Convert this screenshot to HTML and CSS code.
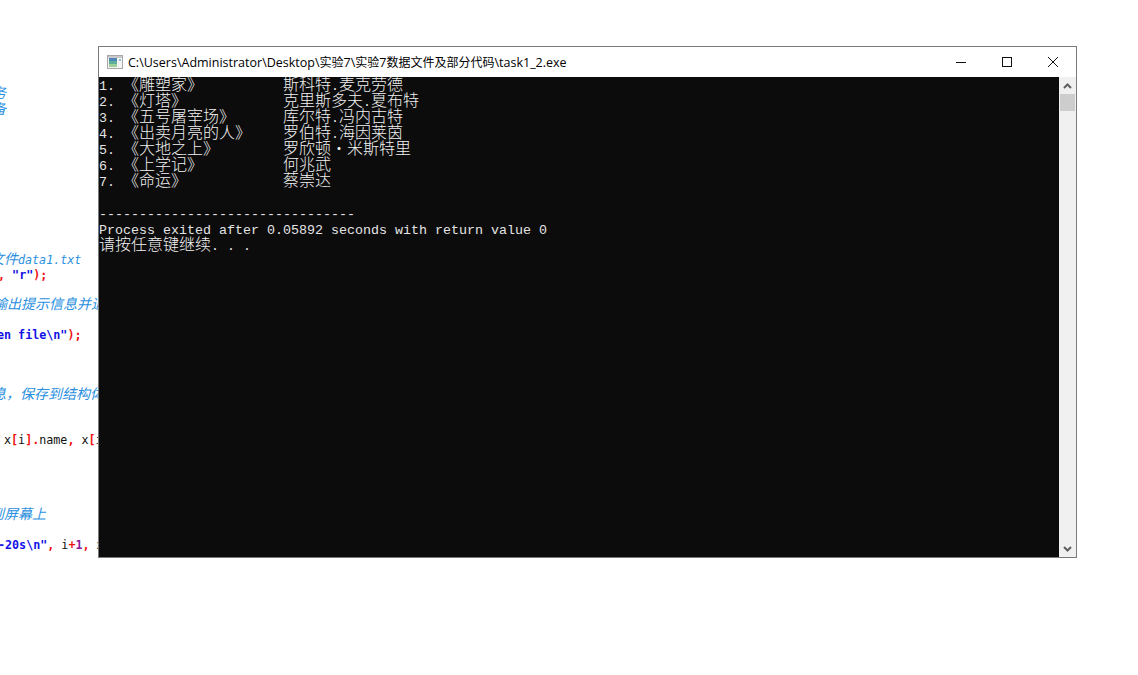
FILE: index.html
```html
<!DOCTYPE html>
<html lang="zh-CN">
<head>
<meta charset="utf-8">
<title>task1_2.exe</title>
<link rel="stylesheet" href="styles.css">
</head>
<body>
<div class="code-pane">
  <div class="code-line cm start-a from-top"><span class="cjk">务</span></div>
  <div class="code-line cm start-a"><span class="cjk">备</span></div>
  <div class="code-line cm start-b gap-134"><span class="cjk">文件</span>data1.txt</div>
  <div class="code-line start-c"><b class="op">,</b> <b class="str">"r"</b><b class="op">);</b></div>
  <div class="code-line cm start-d gap-13"><span class="cjk">输出提示信息并退</span></div>
  <div class="code-line start-e gap-15"><b class="str">en file\n"</b><b class="op">);</b></div>
  <div class="code-line cm start-a gap-43"><span class="cjk">息，保存到结构体</span></div>
  <div class="code-line start-f gap-30">x<b class="op">[</b>i<b class="op">].</b>name<b class="op">,</b> x<b class="op">[</b>i</div>
  <div class="code-line cm start-b gap-58"><span class="cjk">到屏幕上</span></div>
  <div class="code-line start-c gap-15"><b class="str">-20s\n"</b><b class="op">,</b> i<b class="op">+</b><b class="num">1</b><b class="op">,</b> x</div>
</div>

<section class="console-window">
  <header class="title-bar">
    <svg class="app-icon" width="16" height="16" viewBox="0 0 16 16" aria-hidden="true">
      <rect x="0.5" y="1.500" width="15" height="13" fill="#f4f4f4" stroke="#a8a8a8"/>
      <rect x="1" y="2" width="14" height="2" fill="#c9c9c9"/>
      <rect x="2" y="4" width="8" height="9" fill="#5fae9c"/>
      <rect x="2" y="4" width="8" height="3" fill="#4f86b8"/>
      <rect x="2" y="10" width="8" height="3" fill="#9ccf9a"/>
      <rect x="12" y="5" width="2" height="2" fill="#8fc0cc"/>
    </svg>
    <h1 class="title-text">C:\Users\Administrator\Desktop\<span class="title-cjk">实验</span>7\<span class="title-cjk">实验</span>7<span class="title-cjk">数据文件及部分代码</span>\task1_2.exe</h1>
    <div class="controls">
      <span class="control"><svg width="10" height="10" viewBox="0 0 10 10"><path d="M0 5.500H10" stroke="#111" fill="none"/></svg></span>
      <span class="control"><svg width="10" height="10" viewBox="0 0 10 10"><rect x="0.5" y="0.5" width="9" height="9" stroke="#111" fill="none"/></svg></span>
      <span class="control"><svg width="10" height="10" viewBox="0 0 10 10"><path d="M0 0L10 10M10 0L0 10" stroke="#111" stroke-width="1" fill="none"/></svg></span>
    </div>
  </header>
  <div class="console-body">
    <div class="console-output">
<div class="line">1. <span class="zh">《雕塑家》</span>          <span class="zh">斯科特</span>.<span class="zh">麦克劳德</span></div>
<div class="line">2. <span class="zh">《灯塔》</span>            <span class="zh">克里斯多夫</span>.<span class="zh">夏布特</span></div>
<div class="line">3. <span class="zh">《五号屠宰场》</span>      <span class="zh">库尔特</span>.<span class="zh">冯内古特</span></div>
<div class="line">4. <span class="zh">《出卖月亮的人》</span>    <span class="zh">罗伯特</span>.<span class="zh">海因莱茵</span></div>
<div class="line">5. <span class="zh">《大地之上》</span>        <span class="zh">罗欣顿<span class="dot">·</span>米斯特里</span></div>
<div class="line">6. <span class="zh">《上学记》</span>          <span class="zh">何兆武</span></div>
<div class="line">7. <span class="zh">《命运》</span>            <span class="zh">蔡崇达</span></div>
<div class="line"> </div>
<div class="line">--------------------------------</div>
<div class="line">Process exited after 0.05892 seconds with return value 0</div>
<div class="line"><span class="zh">请按任意键继续</span>. . .</div>
    </div>
    <div class="scrollbar">
      <span class="arrow"><svg width="9" height="6" viewBox="0 0 9 6"><path d="M1 5L4.500 1.500L8 5" stroke="#606060" stroke-width="2" fill="none"/></svg></span>
      <span class="thumb"></span>
      <span class="track"></span>
      <span class="arrow"><svg width="9" height="6" viewBox="0 0 9 6"><path d="M1 1L4.500 4.500L8 1" stroke="#606060" stroke-width="2" fill="none"/></svg></span>
    </div>
  </div>
</section>
</body>
</html>
```

FILE: styles.css
```css
html, body {
  margin: 0;
  padding: 0;
  height: 100%;
  background: #fff;
  overflow: hidden;
}

body {
  position: relative;
}

/* Editor partly hidden behind the console window */
.code-pane {
  width: 98px;
  height: 560px;
  overflow: hidden;
  font-family: "DejaVu Sans Mono", "Noto Sans CJK SC", monospace;
  font-size: 11.7px;
  color: #111;
}

.code-line {
  height: 16px;
  line-height: 16px;
  white-space: pre;
}

.code-line b { font-weight: 700; }

.cm {
  font-style: italic;
  color: #2b8fe0;
}

.cjk {
  font-family: "Noto Sans CJK SC", sans-serif;
  font-size: 14px;
  line-height: 14px;
}

.str { color: #1212e6; }
.op { color: #ee1111; }
.num { color: #8a1a9a; }

.from-top { margin-top: 85px; }
.gap-13 { margin-top: 13px; }
.gap-15 { margin-top: 15px; }
.gap-30 { margin-top: 30px; }
.gap-43 { margin-top: 43px; }
.gap-58 { margin-top: 58px; }
.gap-134 { margin-top: 134px; }

.start-a { margin-left: -8px; }
.start-b { margin-left: -10px; }
.start-c { margin-left: -2px; }
.start-d { margin-left: -7px; }
.start-e { margin-left: -3px; }
.start-f { margin-left: 4px; }

/* Console window */
.console-window {
  position: absolute;
  left: 98px;
  top: 46px;
  width: 977px;
  height: 510px;
  border: 1px solid #7a7a7a;
  display: flex;
  flex-direction: column;
  background: #fff;
}

.title-bar {
  flex: 0 0 30px;
  display: flex;
  align-items: center;
  padding-left: 8px;
  background: #fff;
}

.app-icon { flex: none; }

.title-text {
  flex: 1;
  margin: 0 0 0 5px;
  font-family: "Open Sans", "Noto Sans CJK SC", sans-serif;
  font-size: 12.5px;
  font-weight: 400;
  color: #000;
  white-space: nowrap;
}

.title-cjk {
  font-family: "Noto Sans CJK SC", sans-serif;
  font-size: 12px;
}

.controls { display: flex; }

.control {
  width: 46px;
  height: 30px;
  display: flex;
  align-items: center;
  justify-content: center;
}

.console-body {
  flex: 1;
  display: flex;
  min-height: 0;
}

.console-output {
  flex: 1;
  padding-top: 2px;
  background: #0c0c0c;
  color: #e4e4e4;
  font-family: "Liberation Mono", "Noto Sans CJK SC", monospace;
  font-size: 13.333px;
  overflow: hidden;
}

.line {
  height: 16px;
  line-height: 16px;
  white-space: pre;
}

.zh {
  font-family: "Noto Sans CJK SC", sans-serif;
  font-size: 16px;
  line-height: 0;
  font-weight: 300;
  color: #f2f2f2;
}

.dot {
  display: inline-block;
  width: 16px;
  text-align: center;
}

.scrollbar {
  flex: 0 0 17px;
  display: flex;
  flex-direction: column;
  align-items: center;
  background: #f0f0f0;
}

.arrow {
  flex: 0 0 17px;
  display: flex;
  align-items: center;
  justify-content: center;
}

.thumb {
  flex: 0 0 17px;
  width: 15px;
  background: #cdcdcd;
}

.track { flex: 1; }
```
